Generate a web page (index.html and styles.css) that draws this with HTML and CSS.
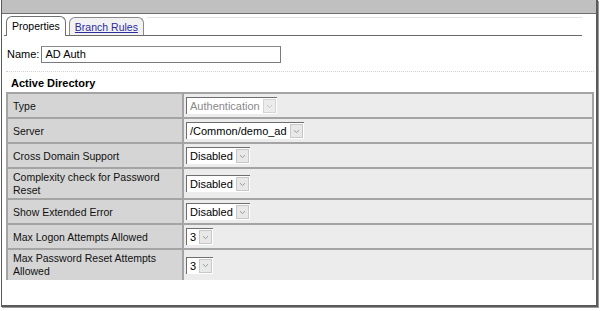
FILE: index.html
```html
<!DOCTYPE html>
<html>
<head>
<meta charset="utf-8">
<link rel="stylesheet" href="styles.css">
</head>
<body>
<div class="window">
  <div class="titlebar"></div>
  <div class="content">
    <div class="tabs">
      <div class="tab active">Properties</div>
      <div class="tab"><a href="#" class="tablink">Branch Rules</a></div>
      <div class="tabfill"></div>
    </div>
    <div class="namerow">
      <span class="namelabel">Name:</span>
      <div class="textbox">AD Auth</div>
    </div>
    <div class="sep"></div>
    <div class="section">Active Directory</div>
    <table class="props">
      <tr>
        <td class="lbl">Type</td>
        <td class="val"><span class="sel disabled"><span class="selv">Authentication</span><span class="arr"><svg width="7" height="5" viewBox="0 0 7 5"><path d="M1 1.2 L3.5 3.6 L6 1.2" fill="none" stroke="#c4c4c4" stroke-width="1"/></svg></span></span></td>
      </tr>
      <tr>
        <td class="lbl">Server</td>
        <td class="val"><span class="sel"><span class="selv">/Common/demo_ad</span><span class="arr"><svg width="7" height="5" viewBox="0 0 7 5"><path d="M1 1.2 L3.5 3.6 L6 1.2" fill="none" stroke="#9a9a9a" stroke-width="1"/></svg></span></span></td>
      </tr>
      <tr>
        <td class="lbl">Cross Domain Support</td>
        <td class="val"><span class="sel"><span class="selv">Disabled</span><span class="arr"><svg width="7" height="5" viewBox="0 0 7 5"><path d="M1 1.2 L3.5 3.6 L6 1.2" fill="none" stroke="#9a9a9a" stroke-width="1"/></svg></span></span></td>
      </tr>
      <tr class="tall">
        <td class="lbl">Complexity check for Password<br>Reset</td>
        <td class="val"><span class="sel"><span class="selv">Disabled</span><span class="arr"><svg width="7" height="5" viewBox="0 0 7 5"><path d="M1 1.2 L3.5 3.6 L6 1.2" fill="none" stroke="#9a9a9a" stroke-width="1"/></svg></span></span></td>
      </tr>
      <tr>
        <td class="lbl">Show Extended Error</td>
        <td class="val"><span class="sel"><span class="selv">Disabled</span><span class="arr"><svg width="7" height="5" viewBox="0 0 7 5"><path d="M1 1.2 L3.5 3.6 L6 1.2" fill="none" stroke="#9a9a9a" stroke-width="1"/></svg></span></span></td>
      </tr>
      <tr>
        <td class="lbl">Max Logon Attempts Allowed</td>
        <td class="val"><span class="sel"><span class="selv">3</span><span class="arr"><svg width="7" height="5" viewBox="0 0 7 5"><path d="M1 1.2 L3.5 3.6 L6 1.2" fill="none" stroke="#9a9a9a" stroke-width="1"/></svg></span></span></td>
      </tr>
      <tr class="tall last">
        <td class="lbl">Max Password Reset Attempts<br>Allowed</td>
        <td class="val"><span class="sel"><span class="selv">3</span><span class="arr"><svg width="7" height="5" viewBox="0 0 7 5"><path d="M1 1.2 L3.5 3.6 L6 1.2" fill="none" stroke="#9a9a9a" stroke-width="1"/></svg></span></span></td>
      </tr>
    </table>
  </div>
</div>
</body>
</html>
```
FILE: styles.css
```css
html, body {
  margin: 0;
  padding: 0;
  background: #ffffff;
}
body {
  width: 600px;
  height: 311px;
  overflow: hidden;
  font-family: "Liberation Sans", Arial, sans-serif;
  font-size: 10.5px;
  color: #000;
}
.window {
  margin-left: 1px;
  width: 594px;
  height: 305px;
  border-left: 1px solid #5a5a5a;
  border-right: 2px solid #5a5a5a;
  border-bottom: 2px solid #5a5a5a;
  box-shadow: 1px 1px 0 #9a9a9a;
  display: flex;
  flex-direction: column;
  overflow: hidden;
}
.titlebar {
  height: 13px;
  background: #c0c0c0;
  border-bottom: 1px solid #6e6e6e;
  flex: none;
}
.content {
  flex: 1;
  padding: 2px 0 0 2px;
}
.tabs {
  display: flex;
  align-items: flex-end;
  height: 19px;
  width: 578px;
  border-bottom: 1px solid #6a6a6a;
}
.tab {
  height: 17px;
  border: 1px solid #8a8a8a;
  border-bottom: none;
  border-radius: 6px 6px 0 0;
  padding: 0 5px;
  line-height: 18px;
  font-size: 10.5px;
  background: #f2f2f2;
  margin-right: 3px;
  margin-bottom: 0;
}
.tab.active {
  background: #ffffff;
  height: 18px;
  margin-left: 2px;
  margin-bottom: -1px;
  padding: 0 5px 1px;
  border-color: #707070;
}
.tablink {
  color: #2b2b9e;
  text-decoration: underline;
}
.tabfill {
  flex: 1;
  align-self: flex-start;
  margin-top: 1px;
  border-top: 1px solid #e2e2e2;
}
.namerow {
  display: flex;
  align-items: center;
  margin-top: 9px;
  padding-left: 3px;
  height: 18px;
}
.namelabel {
  font-size: 11px;
  margin-right: 2px;
}
.textbox {
  width: 235px;
  height: 15px;
  border: 1px solid #7a7a7a;
  border-top-color: #8a8a8a;
  padding-left: 3px;
  line-height: 15px;
  font-size: 11px;
}
.sep {
  margin-top: 8px;
  margin-left: 2px;
  width: 588px;
  border-top: 1px dotted #cfcfcf;
}
.section {
  font-weight: bold;
  font-size: 11px;
  padding-left: 7px;
  margin-top: 4px;
  height: 16px;
  line-height: 14px;
}
.props {
  margin-left: 2px;
  width: 588px;
  border-collapse: collapse;
  border-top: 2px solid #a4a4a4;
  border-left: 2px solid #a4a4a4;
  border-right: 2px solid #a4a4a4;
}
.props td {
  padding: 0;
  height: 23px;
  border-bottom: 2px solid #a4a4a4;
  vertical-align: middle;
}
.props tr.tall td {
  height: 29px;
  line-height: 13px;
}
.props tr.last td {
  border-bottom: none;
  height: 30px;
}
.lbl {
  width: 169px;
  background: #d5d5d5;
  padding-left: 5px !important;
  border-right: 2px solid #a4a4a4;
  color: #111;
}
.val {
  background: #ececec;
  padding-left: 2px !important;
}
.sel {
  display: inline-flex;
  align-items: stretch;
  height: 16px;
  background: #fff;
  border-top: 1px solid #6e6e6e;
  border-left: 1px solid #6e6e6e;
  vertical-align: middle;
}
.selv {
  padding: 0 3px 0 3px;
  line-height: 16px;
  font-size: 11px;
}
.sel.disabled .selv {
  color: #8a8a8a;
}
.arr {
  width: 11px;
  margin: 1px 1px 1px 0;
  background: #e8e8e8;
  border: 1px solid #c8c8c8;
  display: flex;
  align-items: center;
  justify-content: center;
}
.sel.disabled .arr {
  background: #ececec;
  border-color: #d4d4d4;
}
```
